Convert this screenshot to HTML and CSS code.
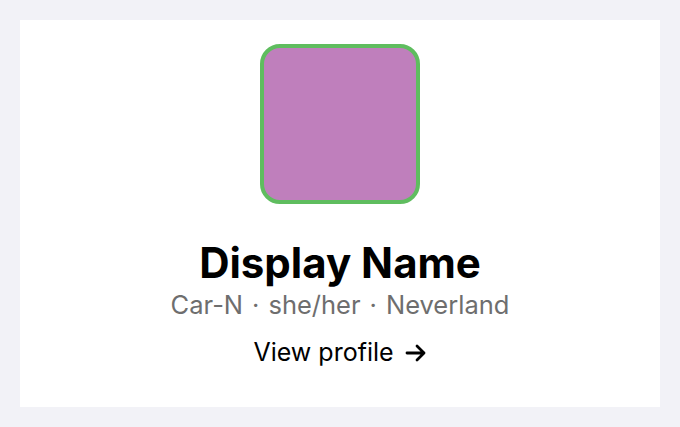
FILE: index.html
```html
<!DOCTYPE html>
<html lang="en">
<head>
<meta charset="utf-8">
<link rel="stylesheet" href="styles.css">
</head>
<body>
<div class="card">
  <div class="avatar"></div>
  <h1 class="name">Display Name</h1>
  <p class="meta">Car-N<span class="sep">·</span>she/her<span class="sep">·</span>Neverland</p>
  <a class="link" href="#">View profile <svg class="arrow" viewBox="0 0 22 22" width="22" height="22"><path d="M2 11h17M12 4l7 7-7 7" fill="none" stroke="#000" stroke-width="2.8" stroke-linecap="round" stroke-linejoin="round"/></svg></a>
</div>
</body>
</html>
```
FILE: styles.css
```css
html, body {
  margin: 0;
  padding: 0;
  background: #f2f2f7;
  font-family: Inter, "Noto Sans", sans-serif;
}
body {
  padding: 20px;
}
.card {
  background: #fff;
  height: 387px;
  box-sizing: border-box;
  padding-top: 24px;
  display: flex;
  flex-direction: column;
  align-items: center;
}
.avatar {
  width: 160px;
  height: 160px;
  box-sizing: border-box;
  border: 4px solid #5fbd5f;
  border-radius: 20px;
  background: #bf7fbc;
}
.name {
  margin: 34px 0 0;
  font-size: 42px;
  line-height: 50px;
  font-weight: 700;
  color: #000;
}
.meta {
  margin: 1px 0 0;
  font-size: 25.5px;
  line-height: 32px;
  color: #6e6e6e;
}
.sep {
  margin: 0 9px;
}
.link {
  margin-top: 16px;
  font-size: 25px;
  line-height: 30px;
  color: #000;
  text-decoration: none;
  display: flex;
  align-items: center;
  gap: 11px;
}
.arrow {
  display: block;
  margin-top: 1px;
}
```
